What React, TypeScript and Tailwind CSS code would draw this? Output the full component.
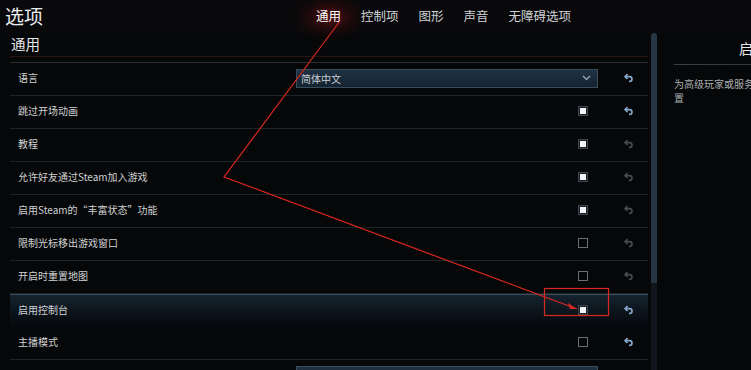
// App.tsx — game options screen (通用 tab)
import React from 'react';

type Row = {
  label: string;
  kind: 'dropdown' | 'checked' | 'unchecked';
  value?: string;
  active?: boolean; // reset arrow lit
  highlight?: boolean;
};

const rows: Row[] = [
  { label: '语言', kind: 'dropdown', value: '简体中文', active: true },
  { label: '跳过开场动画', kind: 'checked', active: true },
  { label: '教程', kind: 'checked' },
  { label: '允许好友通过Steam加入游戏', kind: 'checked' },
  { label: '启用Steam的“丰富状态”功能', kind: 'checked' },
  { label: '限制光标移出游戏窗口', kind: 'unchecked' },
  { label: '开启时重置地图', kind: 'unchecked' },
  { label: '启用控制台', kind: 'checked', active: true, highlight: true },
  { label: '主播模式', kind: 'unchecked', active: true },
  { label: '地图区域显示模式', kind: 'dropdown', value: '', active: true },
];

const tabs = ['通用', '控制项', '图形', '声音', '无障碍选项'];

const ResetIcon = ({ active }: { active?: boolean }) => (
  <svg width="10" height="10" viewBox="0 0 10 10" fill="none" className={active ? 'text-[#86a9cc]' : 'text-[#474c52]'}>
    <path d="M3.6 1.2 L1 3.6 L3.6 6" stroke="currentColor" strokeWidth="1.6" strokeLinejoin="round" />
    <path d="M1.4 3.6 H5.6 a2.4 2.4 0 0 1 0 4.8 H5" stroke="currentColor" strokeWidth="1.6" />
  </svg>
);

const Checkbox = ({ checked }: { checked: boolean }) =>
  checked ? (
    <div className="flex h-[10px] w-[10px] items-center justify-center border border-[#3c4652] bg-[#1a1f26]">
      <div className="h-[6px] w-[6px] bg-[#f2f4f6]" />
    </div>
  ) : (
    <div className="h-[10px] w-[10px] border border-[#6b6f74]" />
  );

const Dropdown = ({ value }: { value?: string }) => (
  <div className="flex h-[19px] w-[302px] items-center justify-between border border-[#3a4b5a] bg-gradient-to-b from-[#1f3243] to-[#142331] pl-[4px] pr-[6px] text-[10px] text-[#c9ced3]">
    <span>{value}</span>
    <svg width="9" height="6" viewBox="0 0 9 6" fill="none">
      <path d="M1 1 L4.5 4.5 L8 1" stroke="#a8b4c0" strokeWidth="1.2" />
    </svg>
  </div>
);

export default function App() {
  return (
    <div
      className="relative h-[370px] w-[751px] overflow-hidden bg-[#060708] text-[#d2d4d6]"
      style={{ fontFamily: '"Noto Sans CJK SC", "Noto Sans", sans-serif' }}
    >
      {/* top bar */}
      <div className="flex h-[33px] items-center bg-[#09090b]">
        <div className="w-[316px] shrink-0 pl-[5px] pb-[3px] text-[19px] leading-none text-[#eceef0]">选项</div>
        <div className="flex items-center gap-[20px] pb-[1px] text-[12.5px] leading-none">
          {tabs.map((t, i) => (
            <div key={t} className="relative">
              {i === 0 && (
                <span className="absolute -left-[24px] -top-[16px] h-[46px] w-[74px] bg-[radial-gradient(ellipse_at_center,rgba(140,18,18,0.55)_0%,rgba(70,8,8,0.25)_45%,transparent_72%)]" />
              )}
              <span className={i === 0 ? 'relative text-white' : 'relative text-[#cfd2d5]'}>{t}</span>
            </div>
          ))}
        </div>
      </div>

      <div className="flex w-[960px]">
        {/* settings list */}
        <div className="ml-[10px] w-[638px] shrink-0">
          <div className="h-[23px] pl-[1px] pt-[4px] text-[14.5px] leading-none text-[#e6e8ea]">通用</div>
          <div className="h-[6px] border-t border-[#2a1313]" />
          <div className="border-t border-[#262c2f]" />
          {rows.map((r) => (
            <div
              key={r.label}
              className={
                r.highlight
                  ? 'flex h-[33px] items-center border-t border-[#3b4e5d] bg-gradient-to-b from-[#152330] to-[#05080b] pb-[2px] pr-[14px]'
                  : 'flex h-[33px] items-center border-b border-[#1b2427] pb-[2px] pr-[14px]'
              }
            >
              <div className="flex-1 pl-[8px] text-[10px] leading-none text-[#d0d2d4]">{r.label}</div>
              <div className="flex w-[302px] shrink-0 justify-end pr-[10px]">
                {r.kind === 'dropdown' ? (
                  <div className="-mr-[10px]">
                    <Dropdown value={r.value} />
                  </div>
                ) : (
                  <Checkbox checked={r.kind === 'checked'} />
                )}
              </div>
              <div className="ml-[26px] w-[10px] shrink-0">
                <ResetIcon active={r.active} />
              </div>
            </div>
          ))}
        </div>

        {/* scrollbar */}
        <div className="ml-[3px] h-[337px] w-[6px] shrink-0 rounded-t-[3px] bg-[#0f151a]">
          <div className="h-[250px] rounded-t-[3px] bg-[#263644]" />
        </div>

        {/* right info panel */}
        <div className="ml-[17px] w-[200px] shrink-0">
          <div className="h-[31px] pt-[8px] text-center text-[14px] leading-none text-[#e4e6e8]">启用控制台</div>
          <div className="h-px bg-gradient-to-r from-[#3a3f44] to-[#2b2f33]" />
          <div className="pt-[12px] text-[10px] leading-[14px] text-[#a9acaf]">
            为高级玩家或服务器管理员启用控制台功能设置
          </div>
        </div>
      </div>

      {/* red annotation */}
      <svg className="pointer-events-none absolute left-0 top-0" width="751" height="370" viewBox="0 0 751 370">
        <polyline points="340,21 224,177 577,309" fill="none" stroke="#d8281f" strokeWidth="1.2" />
        <path d="M577 309 L568 303 L570 309 Z" fill="#d8281f" />
        <rect x="544.5" y="288.5" width="64" height="27" fill="none" stroke="#d8281f" strokeWidth="1.2" />
      </svg>
    </div>
  );
}
